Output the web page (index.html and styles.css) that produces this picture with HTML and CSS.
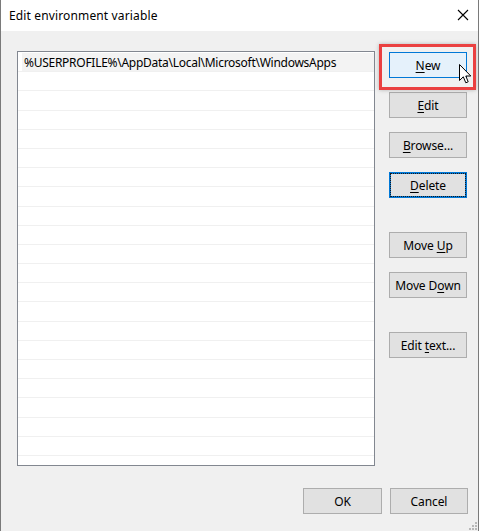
FILE: index.html
```html
<!DOCTYPE html>
<html>
<head>
<meta charset="utf-8">
<link rel="stylesheet" href="styles.css">
</head>
<body>
<div class="window">
  <div class="titlebar">
    <span class="title">Edit environment variable</span>
    <svg class="close" width="12" height="12" viewBox="0 0 12 12"><path d="M1 1L11 11M11 1L1 11" stroke="#000" stroke-width="1.1" fill="none"/></svg>
  </div>
  <div class="content">
    <div class="main">
      <div class="list">
        <div class="row sel"><span>%USERPROFILE%\AppData\Local\Microsoft\WindowsApps</span></div>
        <div class="row"></div><div class="row"></div><div class="row"></div><div class="row"></div>
        <div class="row"></div><div class="row"></div><div class="row"></div><div class="row"></div>
        <div class="row"></div><div class="row"></div><div class="row"></div><div class="row"></div>
        <div class="row"></div><div class="row"></div><div class="row"></div><div class="row"></div>
        <div class="row"></div><div class="row"></div><div class="row"></div><div class="row"></div>
      </div>
      <div class="side">
        <div class="group">
          <div class="btnwrap">
            <button class="btn hot"><u>N</u>ew</button>
            <div class="highlight"></div>
            <svg class="cursor" width="13" height="21" viewBox="0 0 13 21"><path d="M0.5 0.5L0.5 16.5L4.3 12.8L6.8 18.8L9.2 17.8L6.8 12L11.8 12Z" fill="#fff" stroke="#000" stroke-width="1" stroke-linejoin="miter"/></svg>
          </div>
          <button class="btn"><u>E</u>dit</button>
          <button class="btn"><u>B</u>rowse...</button>
          <button class="btn focus"><u>D</u>elete</button>
        </div>
        <div class="group">
          <button class="btn">Move <u>U</u>p</button>
          <button class="btn">Move D<u>o</u>wn</button>
        </div>
        <div class="group">
          <button class="btn">Edit <u>t</u>ext...</button>
        </div>
      </div>
    </div>
    <div class="footer">
      <button class="btn">OK</button>
      <button class="btn">Cancel</button>
    </div>
    <div class="grip">
      <i class="d1"></i><i class="d2"></i><i class="d3"></i><i class="d4"></i><i class="d5"></i><i class="d6"></i>
    </div>
  </div>
</div>
</body>
</html>
```
FILE: styles.css
```css
* { box-sizing: border-box; }
html, body { margin: 0; padding: 0; background: #fff; }
body {
  font-family: "Noto Sans", "Open Sans", sans-serif;
  font-size: 12px;
  color: #000;
}
.window {
  width: 479px;
  height: 531px;
  border-left: 1px solid #7a7a7a;
  border-right: 1px solid #7a7a7a;
  display: flex;
  flex-direction: column;
}
.titlebar {
  height: 31px;
  background: #fff;
  display: flex;
  align-items: center;
  justify-content: space-between;
  padding: 0 9px 1px 8px;
}
.title { font-size: 12px; letter-spacing: 0.14px; }
.close { display: block; margin-right: 0; }
.content {
  flex: 1;
  background: #f0f0f0;
  position: relative;
  padding: 20px 10px 0 16px;
  display: flex;
  flex-direction: column;
}
.main {
  display: flex;
  gap: 14px;
}
.list {
  width: 358px;
  height: 415px;
  background: #fff;
  border: 1px solid #828790;
  padding-top: 1px;
  overflow: hidden;
}
.row {
  height: 19.2px;
  border-bottom: 1px solid #f0f0f0;
  display: flex;
  align-items: center;
}
.row.sel span {
  background: #f3f3f3;
  flex: 1;
  height: 100%;
  margin-left: 4px;
  padding-left: 2px;
  display: flex;
  align-items: center;
  letter-spacing: -0.27px;
}
.side {
  display: flex;
  flex-direction: column;
  gap: 34px;
  padding-top: 1px;
}
.group {
  display: flex;
  flex-direction: column;
  gap: 14px;
}
.btn {
  width: 78px;
  height: 26px;
  background: #e1e1e1;
  border: 1px solid #adadad;
  font-family: inherit;
  font-size: 12px;
  color: #000;
  padding: 0;
  margin: 0;
  text-align: center;
  letter-spacing: -0.1px;
}
.btn u { text-underline-offset: 2px; }
.btn.hot {
  background: #e5f1fb;
  border-color: #0078d7;
  display: block;
}
.btn.focus {
  border: 1px solid #0078d7;
  outline: 1px dotted #1a1a1a;
  outline-offset: -2px;
  box-shadow: inset 0 0 0 1px #0078d7;
}
.btnwrap { position: relative; width: 78px; height: 26px; }
.highlight {
  position: absolute;
  left: -10px;
  top: -8px;
  width: 97px;
  height: 46px;
  border: 3px solid #ea4040;
  box-shadow: 0 0 4px rgba(0,0,0,0.25);
  pointer-events: none;
}
.cursor {
  position: absolute;
  left: 70px;
  top: 12px;
}
.footer {
  display: flex;
  justify-content: flex-end;
  gap: 8px;
  margin-top: 22px;
}
.footer .btn { width: 79px; }
.footer .btn:last-child { width: 78px; }
.grip {
  position: absolute;
  right: 1px;
  bottom: 1px;
  width: 10px;
  height: 10px;
}
.grip i {
  position: absolute;
  width: 2px;
  height: 2px;
  background: #b8b8b8;
}
.grip .d1 { right: 0; bottom: 0; }
.grip .d2 { right: 3px; bottom: 0; }
.grip .d3 { right: 6px; bottom: 0; }
.grip .d4 { right: 0; bottom: 3px; }
.grip .d5 { right: 3px; bottom: 3px; }
.grip .d6 { right: 0; bottom: 6px; }
```
